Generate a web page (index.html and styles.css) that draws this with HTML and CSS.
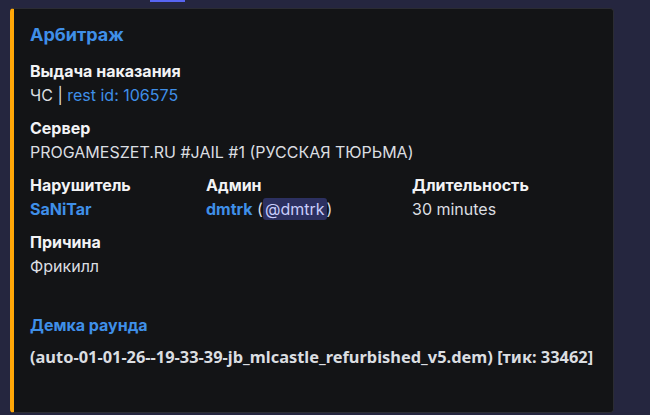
FILE: index.html
```html
<!DOCTYPE html>
<html lang="ru">
<head>
    <meta charset="UTF-8">
    <meta name="viewport" content="width=device-width, initial-scale=1.0">
    <title>Арбитраж</title>
    <link rel="stylesheet" href="styles.css">
</head>
<body>
    <div class="top-mark"></div>
    <article class="embed">
        <h2 class="embed-title">Арбитраж</h2>

        <div class="fields">
            <div class="field field-full">
                <div class="field-name">Выдача наказания</div>
                <div class="field-value">ЧС | <span class="link">rest id: 106575</span></div>
            </div>

            <div class="field field-full">
                <div class="field-name">Сервер</div>
                <div class="field-value">PROGAMESZET.RU #JAIL #1 (РУССКАЯ ТЮРЬМА)</div>
            </div>

            <div class="field">
                <div class="field-name">Нарушитель</div>
                <div class="field-value"><strong class="link">SaNiTar</strong></div>
            </div>
            <div class="field">
                <div class="field-name">Админ</div>
                <div class="field-value"><strong class="link">dmtrk</strong> (<span class="mention">@dmtrk</span>)</div>
            </div>
            <div class="field">
                <div class="field-name">Длительность</div>
                <div class="field-value">30 minutes</div>
            </div>

            <div class="field field-full">
                <div class="field-name">Причина</div>
                <div class="field-value">Фрикилл</div>
            </div>
        </div>

        <div class="demo">
            <div class="demo-name">Демка раунда</div>
            <div class="demo-value">(auto-01-01-26--19-33-39-jb_mlcastle_refurbished_v5.dem) [тик: 33462]</div>
        </div>
    </article>
</body>
</html>
```

FILE: styles.css
```css
body {
    margin: 0;
    background-color: #25263f;
    font-family: Inter, "Noto Sans", sans-serif;
    color: #dbdee1;
    height: 415px;
    overflow: hidden;
}

.top-mark {
    margin-left: 150px;
    width: 35px;
    height: 2px;
    background-color: #5865f2;
}

.embed {
    margin: 6px 0 0 10px;
    width: 604px;
    height: 405px;
    box-sizing: border-box;
    background-color: #131416;
    border: 1px solid #2b2c33;
    border-left: 4px solid #ffa707;
    border-radius: 4px;
    padding: 14px 16px 0 16px;
}

.embed-title {
    margin: 0;
    font-size: 18px;
    line-height: 24px;
    font-weight: 700;
    color: #3f8fe8;
}

.fields {
    margin-top: 14px;
    display: grid;
    grid-template-columns: 168px 198px auto;
    column-gap: 8px;
    row-gap: 12px;
}

.field-full {
    grid-column: 1 / 4;
}

.field-name {
    font-size: 16px;
    line-height: 20px;
    font-weight: 700;
    color: #f2f3f5;
    margin-bottom: 3px;
}

.field-value {
    font-size: 16px;
    line-height: 22px;
}

.link {
    color: #3f8fe8;
}

.mention {
    background-color: #2c3060;
    color: #c9cdfb;
    border-radius: 3px;
    padding: 1px 2px;
}

.demo {
    margin-top: 38px;
}

.demo-name {
    font-size: 16px;
    line-height: 20px;
    font-weight: 700;
    color: #3f8fe8;
}

.demo-value {
    margin-top: 11px;
    font-family: "Noto Sans", sans-serif;
    font-size: 16.4px;
    line-height: 22px;
    font-weight: 700;
    white-space: nowrap;
    color: #dbdee1;
}
```
